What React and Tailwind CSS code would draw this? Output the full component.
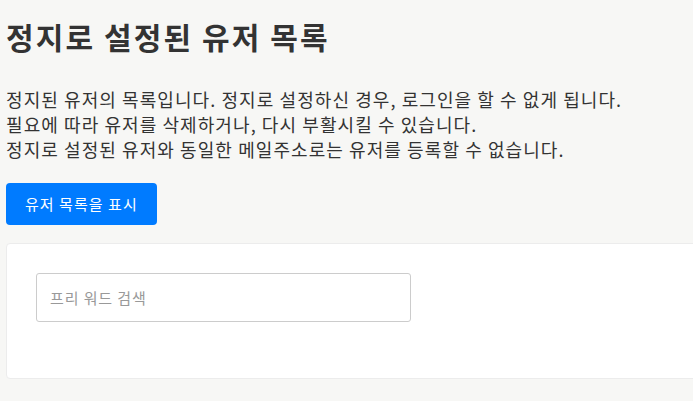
import React from 'react'

const font = { fontFamily: '"Noto Sans CJK KR", "Noto Sans", sans-serif' }

const App = () => {
  return (
    <div className="min-h-[401px] bg-[#f7f7f5] pl-[6px] overflow-hidden" style={font}>
      <h1 className="pt-[18px] text-[30px] leading-[36px] font-bold text-[#333333] tracking-[0.07em]">정지로 설정된 유저 목록</h1>
      <p className="mt-[33px] text-[18px] leading-[25px] text-[#333333] whitespace-nowrap tracking-[0.06em]">
        정지된 유저의 목록입니다. 정지로 설정하신 경우, 로그인을 할 수 없게 됩니다.
        <br />
        필요에 따라 유저를 삭제하거나, 다시 부활시킬 수 있습니다.
        <br />
        정지로 설정된 유저와 동일한 메일주소로는 유저를 등록할 수 없습니다.
      </p>
      <button className="mt-[21px] h-[42px] px-[19px] rounded-[4px] bg-[#007bff] text-white text-[15px] tracking-[0.07em]">
        유저 목록을 표시
      </button>
      <div className="mt-[18px] w-[720px] bg-white rounded-[4px] border border-[#ececec] px-[29px] pt-[29px] pb-[56px]">
        <input
          className="w-[375px] h-[49px] border border-[#cccccc] rounded-[3px] px-[13px] text-[15px] text-[#333] placeholder:text-[#999999] outline-none tracking-[0.06em]"
          placeholder="프리 워드 검색"
          style={font}
        />
      </div>
    </div>
  )
}

export default App
